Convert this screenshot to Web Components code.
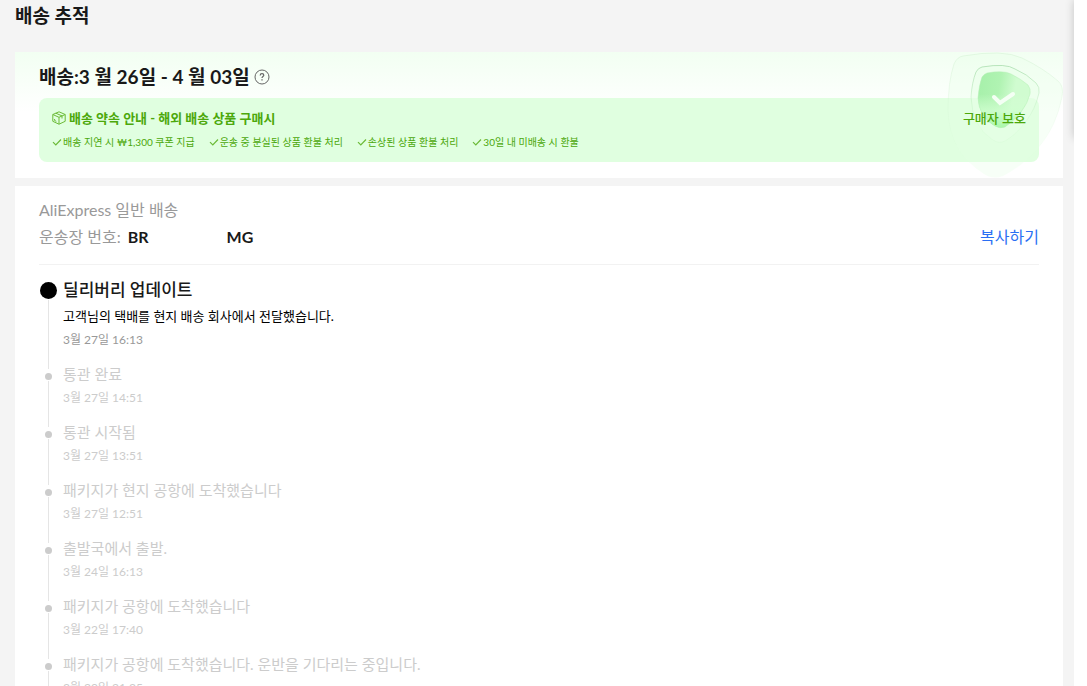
<!DOCTYPE html>
<html lang="ko">
<head>
<meta charset="utf-8">
<meta name="viewport" content="width=device-width, initial-scale=1">
<title>배송 추적</title>
<style>
    body {
        margin: 0;
        background: #f4f4f4;
        color: #191919;
        font-family: Lato, "Noto Sans CJK KR", sans-serif;
        font-size: 16px;
    }
</style>
</head>
<body>
<tracking-page>
    <delivery-summary dates="배송:3 월 26일 - 4 월 03일">
        <promise-item>배송 지연 시 ₩1,300 쿠폰 지급</promise-item>
        <promise-item>운송 중 분실된 상품 환불 처리</promise-item>
        <promise-item>손상된 상품 환불 처리</promise-item>
        <promise-item>30일 내 미배송 시 환불</promise-item>
    </delivery-summary>
    <parcel-detail>
        <tracking-event current time="3월 27일 16:13" heading="딜리버리 업데이트">고객님의 택배를 현지 배송 회사에서 전달했습니다.</tracking-event>
        <tracking-event time="3월 27일 14:51" heading="통관 완료"></tracking-event>
        <tracking-event time="3월 27일 13:51" heading="통관 시작됨"></tracking-event>
        <tracking-event time="3월 27일 12:51" heading="패키지가 현지 공항에 도착했습니다"></tracking-event>
        <tracking-event time="3월 24일 16:13" heading="출발국에서 출발."></tracking-event>
        <tracking-event time="3월 22일 17:40" heading="패키지가 공항에 도착했습니다"></tracking-event>
        <tracking-event time="3월 20일 21:35" heading="패키지가 공항에 도착했습니다. 운반을 기다리는 중입니다."></tracking-event>
    </parcel-detail>
</tracking-page>

<script>
const makeTemplate = html => {
    const template = document.createElement('template')
    template.innerHTML = html
    return template
}

const pageTemplate = makeTemplate(`
    <style>
        :host {
            display: flex;
            min-height: 100vh;
        }
        main {
            flex: 1;
            min-width: 0;
            padding: 0 11px 0 15px;
        }
        h1 {
            margin: 0 0 20px;
            font-size: 19px;
            line-height: 32px;
            font-weight: 700;
        }
        .cards {
            display: flex;
            flex-direction: column;
            gap: 8px;
        }
        aside {
            width: 13px;
            background: #fff;
        }
        /* shadow falls to the left only */
        .edge {
            height: 138px;
            box-shadow: 0 0 10px rgba(0, 0, 0, .2);
            clip-path: inset(0 100% -10px -10px);
        }
    </style>
    <main>
        <h1>배송 추적</h1>
        <div class="cards"><slot></slot></div>
    </main>
    <aside><div class="edge"></div></aside>
`)

class TrackingPage extends HTMLElement {
    constructor() {
        super()
        this.attachShadow({ mode: 'open' })
        this.shadowRoot.appendChild(pageTemplate.content.cloneNode(true))
    }
}

const summaryTemplate = makeTemplate(`
    <style>
        :host {
            display: block;
            position: relative;
            overflow: hidden;
            padding: 12px 24px 16px;
            background: linear-gradient(#f2fff2, #fff 60px);
        }
        header {
            display: flex;
            align-items: center;
            gap: 4px;
            height: 26px;
            margin-bottom: 8px;
        }
        h2 {
            margin: 0;
            font-size: 19px;
            line-height: 26px;
            font-weight: 700;
        }
        .help {
            width: 16px;
            height: 16px;
            padding: 0;
            border: 0;
            background: none;
            cursor: pointer;
        }
        svg {
            display: block;
        }
        .promise {
            display: flex;
            align-items: center;
            justify-content: space-between;
            padding: 10px 13px 11px;
            border-radius: 8px;
            background: #e0ffe0;
            color: #4ca80b;
        }
        h3 {
            display: flex;
            align-items: center;
            gap: 3px;
            margin: 0 0 5px;
            font-size: 13px;
            line-height: 20px;
            font-weight: 700;
        }
        .items {
            display: flex;
            flex-wrap: wrap;
            gap: 0 14px;
        }
        .shield {
            position: absolute;
            right: 0;
            top: 0;
        }
        .guard {
            position: relative;
            z-index: 1;
            align-self: flex-start;
            font-size: 13px;
            line-height: 20px;
            font-weight: 500;
        }
    </style>
    <header>
        <h2></h2>
        <button class="help" aria-label="도움말">
            <svg width="16" height="16" viewBox="0 0 16 16" fill="none" stroke="#666">
                <circle cx="8" cy="8" r="7"/>
                <path d="M6.2 6.4c0-1 .8-1.7 1.8-1.7s1.8.7 1.8 1.6c0 1.2-1.8 1.3-1.8 2.7" stroke-width="1.2"/>
                <path d="M8 10.2v1.3" stroke-width="1.3"/>
            </svg>
        </button>
    </header>
    <div class="promise">
        <div>
            <h3>
                <svg width="14" height="14" viewBox="0 0 14 14" fill="none" stroke="#6cbb38" stroke-linejoin="round">
                    <path d="M7 .8 13.2 3.5v6.8L7 13.2.8 10.3V3.5zM.8 3.5 7 6.3l6.2-2.8M7 6.3v6.9M3.8 2.2l6.2 2.7v2.6M2.6 8v1.5l1.7.8"/>
                </svg>
                배송 약속 안내 - 해외 배송 상품 구매시
            </h3>
            <div class="items"><slot></slot></div>
        </div>
        <span class="guard">구매자 보호</span>
    </div>
    <svg class="shield" width="118" height="126" viewBox="0 0 118 126" fill="none">
        <defs>
            <linearGradient id="edge" x1="0" y1="0" x2="0" y2="1">
                <stop offset="0" stop-color="#c8ecc8" stop-opacity=".4"/>
                <stop offset=".8" stop-color="#c8ecc8" stop-opacity="0"/>
            </linearGradient>
            <linearGradient id="rim" x1="0" y1="0" x2="0" y2="1">
                <stop offset="0" stop-color="#9fd8a4" stop-opacity=".7"/>
                <stop offset=".75" stop-color="#b4ecb4" stop-opacity=".1"/>
            </linearGradient>
            <linearGradient id="glow" x1="0" y1=".2" x2="1" y2=".4">
                <stop offset="0" stop-color="#a6f0aa"/>
                <stop offset=".4" stop-color="#b0f3b2"/>
                <stop offset=".7" stop-color="#d0fcd0"/>
            </linearGradient>
            <linearGradient id="fade" x1="0" y1="0" x2="0" y2="1">
                <stop offset=".4" stop-color="#d6ffd6" stop-opacity="0"/>
                <stop offset=".7" stop-color="#d0ffd0" stop-opacity=".8"/>
                <stop offset="1" stop-color="#a8f8a8"/>
            </linearGradient>
        </defs>
        <path fill="#e6ffe6" fill-opacity=".3" stroke="url(#edge)" d="M18 4Q58-3 77 6Q98 16 113 29Q119 34 117 45Q111 75 94 95Q78 114 58 124Q48 128 39 122Q4 100 3 58Q3 30 9 12Q12 5 18 4Z"/>
        <path fill="#e8ffe8" fill-opacity=".5" stroke="url(#rim)" d="M37 15Q61 11 70 17Q82 22 91 31Q95 35 94 41Q90 58 81 69Q72 82 60 89Q54 92 48 88Q27 75 26 45Q27 30 31 20Q33 16 37 15Z"/>
        <path fill="url(#glow)" d="M42 21Q58 18 66 22Q76 27 83 33Q86 37 85 42Q80 61 60 75Q55 77 50 74Q34 65 33 46Q34 33 37 25Q39 22 42 21Z"/>
        <path fill="url(#fade)" stroke="#b6efb6" stroke-opacity=".5" d="M42 21Q58 18 66 22Q76 27 83 33Q86 37 85 42Q80 61 60 75Q55 77 50 74Q34 65 33 46Q34 33 37 25Q39 22 42 21Z"/>
        <path stroke="#f4fff4" stroke-width="4" stroke-linecap="round" d="M49 45 55 51 68 42"/>
    </svg>
`)

class DeliverySummary extends HTMLElement {
    constructor() {
        super()
        this.attachShadow({ mode: 'open' })
        this.shadowRoot.appendChild(summaryTemplate.content.cloneNode(true))
    }

    connectedCallback() {
        this.shadowRoot.querySelector('h2').textContent = this.getAttribute('dates')
    }
}

const promiseTemplate = makeTemplate(`
    <style>
        :host {
            display: flex;
            align-items: center;
            gap: 1px;
            font-size: 10px;
            line-height: 18px;
        }
    </style>
    <svg width="10" height="10" viewBox="0 0 10 10" fill="none" stroke="#6cbb38" stroke-width="1.2">
        <path d="M1 5.2 3.8 8 9 2.5"/>
    </svg>
    <span><slot></slot></span>
`)

class PromiseItem extends HTMLElement {
    constructor() {
        super()
        this.attachShadow({ mode: 'open' })
        this.shadowRoot.appendChild(promiseTemplate.content.cloneNode(true))
    }
}

const parcelTemplate = makeTemplate(`
    <style>
        :host {
            display: block;
            padding: 12px 24px 0;
            background: #fff;
        }
        .carrier, .number {
            color: #999;
            line-height: 24px;
        }
        .row {
            display: flex;
            justify-content: space-between;
            align-items: center;
            padding: 3px 0 15px;
            border-bottom: 1px solid #f2f2f2;
            margin-bottom: 12px;
        }
        .number {
            display: flex;
            gap: 7px;
        }
        /* the middle of the number stays hidden */
        b {
            display: flex;
            gap: 78px;
            color: #191919;
        }
        button {
            padding: 0;
            border: 0;
            background: none;
            color: #2a6ff3;
            font: inherit;
            line-height: 24px;
            cursor: pointer;
        }
    </style>
    <div class="carrier">AliExpress 일반 배송</div>
    <div class="row">
        <div class="number">운송장 번호: <b><span>BR</span><span>MG</span></b></div>
        <button>복사하기</button>
    </div>
    <slot></slot>
`)

class ParcelDetail extends HTMLElement {
    constructor() {
        super()
        this.attachShadow({ mode: 'open' })
        this.shadowRoot.appendChild(parcelTemplate.content.cloneNode(true))
    }
}

const eventTemplate = makeTemplate(`
    <style>
        :host {
            display: flex;
            gap: 6px;
            color: #ccc;
        }
        .rail {
            display: flex;
            flex-direction: column;
            align-items: center;
            gap: 1px;
            width: 18px;
            padding-top: 11px;
        }
        .dot {
            width: 7px;
            height: 7px;
            border-radius: 50%;
            background: #ccc;
        }
        /* runs on to just above the next dot */
        .line {
            flex: 1;
            width: 1px;
            margin-bottom: -7px;
            background: #e5e5e5;
        }
        .body {
            padding-bottom: 10px;
        }
        .heading {
            font-size: 15px;
            line-height: 24px;
        }
        .text {
            margin: 2px 0 1px;
            font-size: 13px;
            line-height: 22px;
            color: #000;
        }
        .time {
            font-size: 12px;
            line-height: 24px;
        }
        :host([current]) .rail {
            padding-top: 5px;
        }
        :host([current]) .dot {
            width: 17px;
            height: 17px;
            background: #000;
        }
        :host([current]) .heading {
            font-size: 17px;
            line-height: 26px;
            font-weight: 500;
            color: #191919;
        }
        :host([current]) .time {
            color: #999;
        }
        :host(:not([current])) .text {
            display: none;
        }
    </style>
    <div class="rail"><div class="dot"></div><div class="line"></div></div>
    <div class="body">
        <div class="heading"></div>
        <div class="text"><slot></slot></div>
        <div class="time"></div>
    </div>
`)

class TrackingEvent extends HTMLElement {
    constructor() {
        super()
        this.attachShadow({ mode: 'open' })
        this.shadowRoot.appendChild(eventTemplate.content.cloneNode(true))
    }

    connectedCallback() {
        this.shadowRoot.querySelector('.heading').textContent = this.getAttribute('heading')
        this.shadowRoot.querySelector('.time').textContent = this.getAttribute('time')
    }
}

customElements.define('tracking-page', TrackingPage)
customElements.define('delivery-summary', DeliverySummary)
customElements.define('promise-item', PromiseItem)
customElements.define('parcel-detail', ParcelDetail)
customElements.define('tracking-event', TrackingEvent)
</script>
</body>
</html>
